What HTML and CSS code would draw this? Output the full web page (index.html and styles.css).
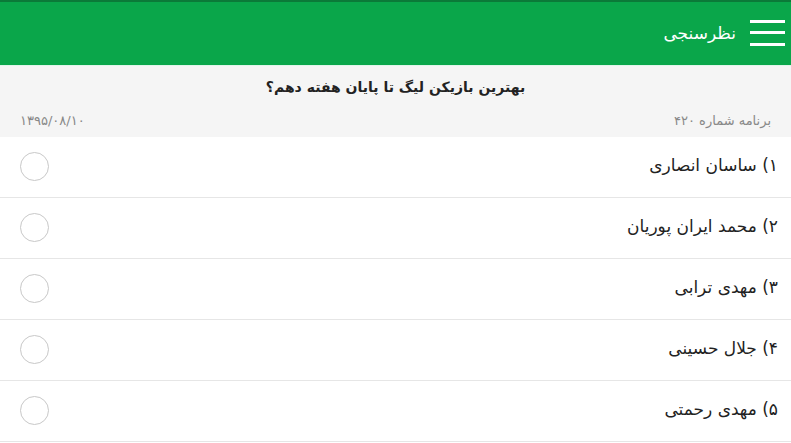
FILE: index.html
```html
<!DOCTYPE html>
<html lang="fa" dir="rtl">
<head>
<meta charset="utf-8">
<link rel="stylesheet" href="styles.css">
</head>
<body>
<header class="appbar">
  <div class="menu" aria-label="menu">
    <span></span><span></span><span></span>
  </div>
  <div class="title">نظرسنجی</div>
</header>
<section class="info">
  <h1 class="question">بهترین بازیکن لیگ تا پایان هفته دهم؟</h1>
  <div class="meta">
    <span class="program">برنامه شماره ۴۲۰</span>
    <span class="date">۱۳۹۵/۰۸/۱۰</span>
  </div>
</section>
<ul class="options">
  <li class="option"><span class="label">۱) ساسان انصاری</span><span class="radio"></span></li>
  <li class="option"><span class="label">۲) محمد ایران پوریان</span><span class="radio"></span></li>
  <li class="option"><span class="label">۳) مهدی ترابی</span><span class="radio"></span></li>
  <li class="option"><span class="label">۴) جلال حسینی</span><span class="radio"></span></li>
  <li class="option"><span class="label">۵) مهدی رحمتی</span><span class="radio"></span></li>
</ul>
</body>
</html>
```
FILE: styles.css
```css
html, body {
  margin: 0;
  padding: 0;
  background: #ffffff;
  font-family: "DejaVu Sans", sans-serif;
  width: 791px;
  overflow: hidden;
}
.appbar {
  height: 63px;
  background: #0aa64a;
  border-top: 2px solid #0b7a38;
  display: flex;
  align-items: center;
  padding-right: 6px;
  gap: 14px;
  box-sizing: content-box;
}
.menu {
  width: 35px;
  height: 26px;
  display: flex;
  flex-direction: column;
  justify-content: space-between;
  margin-bottom: 2px;
}
.menu span {
  display: block;
  height: 3px;
  background: #ffffff;
}
.title {
  color: #ffffff;
  font-size: 17px;
  margin-bottom: 2px;
}
.info {
  background: #f5f5f5;
  border-top: 1px solid #dff5ea;
  height: 71px;
  display: flex;
  flex-direction: column;
}
.question {
  margin: 0;
  text-align: center;
  font-size: 14px;
  font-weight: bold;
  color: #222222;
  padding-top: 10px;
  height: 33px;
  line-height: 22px;
}
.meta {
  display: flex;
  justify-content: space-between;
  padding: 0 20px 0 20px;
  color: #888888;
  font-size: 13px;
  line-height: 16px;
  margin-top: 4px;
}
.options {
  list-style: none;
  margin: 0;
  padding: 0;
}
.option {
  height: 60px;
  border-bottom: 1px solid #e6e6e6;
  display: flex;
  align-items: center;
  justify-content: space-between;
  padding: 0 13px 0 20px;
}
.label {
  font-size: 17px;
  color: #222222;
  margin-top: -4px;
}
.radio {
  width: 27px;
  height: 27px;
  border: 1.5px solid #c8c8c8;
  border-radius: 50%;
  margin-top: -2px;
}
```
